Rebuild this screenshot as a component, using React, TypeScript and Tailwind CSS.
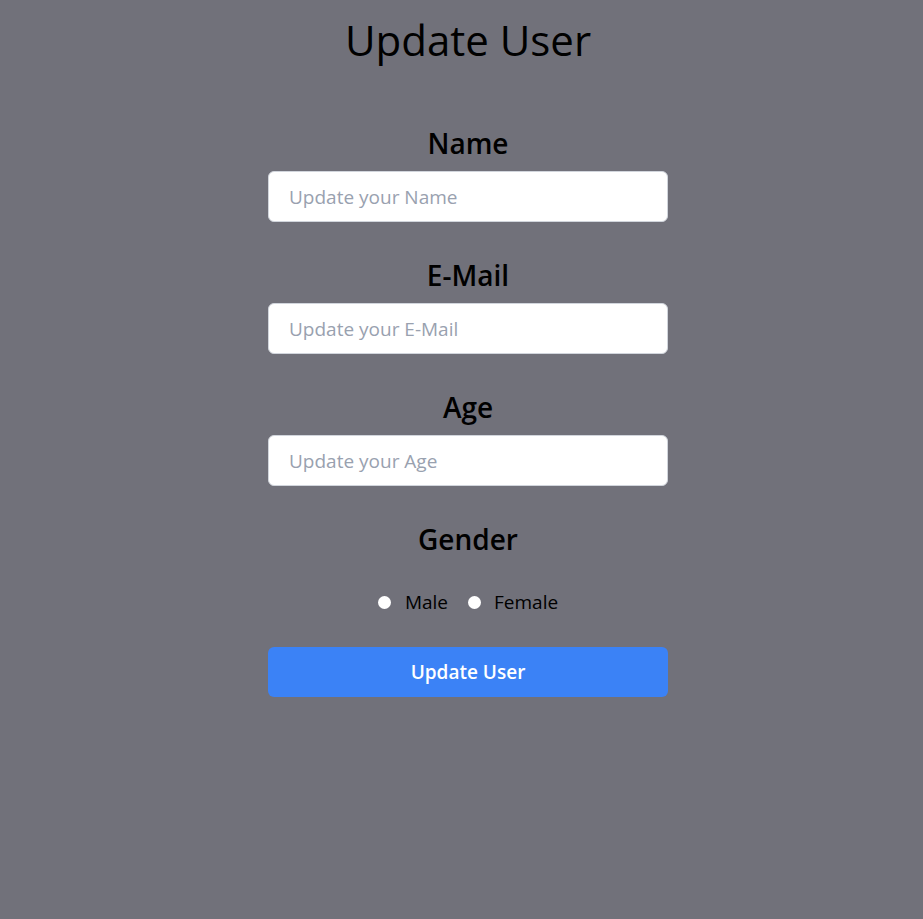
import React, { useState } from 'react';

const font = { fontFamily: '"Open Sans", "Noto Sans", sans-serif' };

const Field = ({ label, placeholder }: { label: string; placeholder: string }) => (
  <div className="flex flex-col mb-[35px]">
    <label className="block text-center text-[28px] leading-[36px] font-semibold text-black mb-[10px]">{label}</label>
    <input
      type="text"
      placeholder={placeholder}
      className="h-[51px] w-full rounded-md border border-gray-300 bg-white px-5 text-[19px] text-gray-800 placeholder:text-gray-400 outline-none"
    />
  </div>
);

export default function App() {
  const [gender, setGender] = useState('');

  return (
    <div className="min-h-screen w-full bg-[#71717a] flex flex-col items-center pl-[13px]" style={font}>
      <h1 className="mt-[16px] text-[42px] leading-[48px] font-normal text-black">Update User</h1>

      <form className="w-[400px] mt-[61px] flex flex-col" onSubmit={(e) => e.preventDefault()}>
        <Field label="Name" placeholder="Update your Name" />
        <Field label="E-Mail" placeholder="Update your E-Mail" />
        <Field label="Age" placeholder="Update your Age" />

        <label className="block text-center text-[28px] leading-[36px] font-semibold text-black">Gender</label>

        <div className="mt-[33px] h-[24px] flex items-center justify-center gap-[20px] text-[19px] text-black">
          <label className="flex items-center gap-[14px]">
            <input
              type="radio"
              name="gender"
              checked={gender === 'male'}
              onChange={() => setGender('male')}
              className="appearance-none w-[13px] h-[13px] rounded-full bg-white checked:border-[4px] checked:border-blue-500"
            />
            Male
          </label>
          <label className="flex items-center gap-[13px]">
            <input
              type="radio"
              name="gender"
              checked={gender === 'female'}
              onChange={() => setGender('female')}
              className="appearance-none w-[13px] h-[13px] rounded-full bg-white checked:border-[4px] checked:border-blue-500"
            />
            Female
          </label>
        </div>

        <button
          type="submit"
          className="mt-[33px] h-[50px] w-full rounded-md bg-[#3b82f6] text-white text-[19px] font-semibold"
        >
          Update User
        </button>
      </form>
    </div>
  );
}
